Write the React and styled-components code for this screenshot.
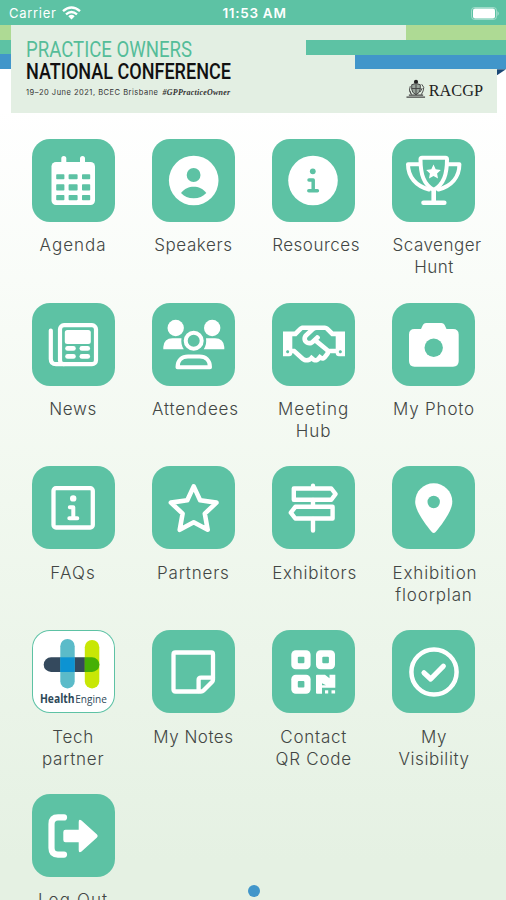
import React from 'react';
import styled, { createGlobalStyle } from 'styled-components';
import { FaRegHandshake } from 'react-icons/fa';

const color = {
  green: '#5dc2a4',
  lime: '#aeda94',
  blue: '#4196ca',
  navy: '#1c4a77',
  panel: '#e3efe3',
  text: '#424644',
};

const GlobalStyle = createGlobalStyle`
  * { box-sizing: border-box; }
  body { margin: 0; }
`;

const Screen = styled.div`
  width: 506px;
  height: 900px;
  overflow: hidden;
  position: relative;
  display: flex;
  flex-direction: column;
  background: linear-gradient(#ffffff 110px, #f1f8ef 500px, #e5f1e3 860px);
  font-family: Inter, 'Liberation Sans', sans-serif;
`;

const StatusBar = styled.div`
  flex: none;
  height: 25px;
  padding: 1px 6px 0 9px;
  display: grid;
  grid-template-columns: 1fr auto 1fr;
  align-items: center;
  background: ${color.green};
  color: #fff;
  font-size: 13px;
`;

const Carrier = styled.div`
  display: flex;
  align-items: center;
  gap: 5px;
  letter-spacing: 0.7px;
`;

const Clock = styled.div`
  font-size: 13.5px;
  font-weight: 600;
  letter-spacing: 0.7px;
`;

const Battery = styled.svg`
  justify-self: end;
`;

const Banner = styled.header`
  flex: none;
  position: relative;
  padding: 0 9px 0 11px;
  background: linear-gradient(
    ${color.lime} 15px,
    ${color.green} 15px 29.5px,
    ${color.blue} 29.5px 44px,
    #fff 44px
  ) left / 11px 100% no-repeat;
`;

const Panel = styled.div`
  height: 88px;
  padding: 13.5px 14px 0 15px;
  display: flex;
  justify-content: space-between;
  background: ${color.panel};
`;

const Title = styled.div`
  width: 240px;
  height: 22px;
  font-family: Roboto, sans-serif;
  font-size: 22px;
  font-weight: ${p => p.weight};
  line-height: 22px;
  white-space: nowrap;
  color: ${p => p.tint};
  transform: scaleX(${p => p.squeeze});
  transform-origin: left;
`;

const Details = styled.div`
  display: flex;
  gap: 4px;
  margin-top: 5.5px;
  font-size: 7.5px;
  line-height: 10px;
  letter-spacing: 0.5px;
  white-space: nowrap;
  color: #333;
`;

const HashTag = styled.span`
  font-family: 'Liberation Serif', serif;
  font-size: 8px;
  font-style: italic;
  font-weight: 700;
  letter-spacing: 0.25px;
`;

const Racgp = styled.div`
  align-self: flex-end;
  height: 34px;
  display: flex;
  gap: 3px;
  font-family: 'Liberation Serif', serif;
  font-size: 16.3px;
  line-height: 23px;
  color: #222;
`;

const Ribbons = styled.div`
  position: absolute;
  top: 0;
  right: 0;
  display: flex;
  flex-direction: column;
  align-items: flex-end;
`;

const Ribbon = styled.div`
  width: ${p => p.length}px;
  height: 14.75px;
  background: ${p => p.tint};
`;

const Fold = styled.div`
  width: 9px;
  height: 6px;
  background: ${color.navy};
  clip-path: polygon(0 0, 100% 0, 0 100%);
`;

const Grid = styled.main`
  display: grid;
  grid-template-columns: repeat(4, 83px);
  grid-auto-rows: 163.8px;
  column-gap: 37.3px;
  padding: 25.8px 0 0 31.6px;
`;

const Item = styled.div`
  display: flex;
  flex-direction: column;
`;

const Tile = styled.div`
  flex: none;
  width: 83px;
  height: 83px;
  border-radius: 18px;
  overflow: hidden;
  display: flex;
  align-items: center;
  justify-content: center;
  color: #fff;
  background: ${p => (p.plain ? '#fff' : color.green)};
  box-shadow: ${p => (p.plain ? `inset 0 0 0 1px ${color.green}` : 'none')};
`;

const Label = styled.div`
  margin-top: 12.4px;
  font-size: 17px;
  font-weight: 300;
  line-height: 22px;
  letter-spacing: ${p => p.tracking || 0.75}px;
  white-space: pre;
  color: ${color.text};
`;

const Line = styled.div`
  display: flex;
  justify-content: safe center;
`;

const Drawing = styled.svg`
  width: 83px;
  height: 83px;
`;

const Handshake = styled(FaRegHandshake)`
  width: 62px;
  height: 50px;
`;

const PageDot = styled.div`
  position: absolute;
  left: 247.5px;
  top: 884.5px;
  width: 12px;
  height: 12px;
  border-radius: 50%;
  background: ${color.blue};
`;

// all tile icons share the 83px tile as their canvas
const Icon = ({ children }) => (
  <Drawing viewBox="0 0 83 83" fill="#fff">{children}</Drawing>
);

const Strokes = ({ width = 4, children }) => (
  <g fill="none" stroke="#fff" strokeWidth={width} strokeLinecap="round" strokeLinejoin="round">
    {children}
  </g>
);

const Agenda = () => (
  <Icon>
    <rect x="19.5" y="23" width="43.5" height="43" rx="4.5" />
    <rect x="29.3" y="17" width="5" height="10" rx="2.5" />
    <rect x="48" y="17" width="5" height="10" rx="2.5" />
    <g fill={color.green}>
      {[[35.3, 5], [45.3, 6.3], [56, 5.3]].map(([y, h]) => (
        <React.Fragment key={y}>
          <rect x="24.2" y={y} width="8.2" height={h} rx="0.8" />
          <rect x="36.6" y={y} width="9" height={h} rx="0.8" />
          <rect x="50" y={y} width="8.2" height={h} rx="0.8" />
        </React.Fragment>
      ))}
    </g>
  </Icon>
);

const Speakers = () => (
  <Icon>
    <circle cx="41.7" cy="41.5" r="24.8" />
    <g fill={color.green}>
      <circle cx="41.6" cy="36" r="6.9" />
      <path d="M29 54C32.5 49.5 37 47.7 41.7 47.7S51 49.5 54.3 54C51 57.5 47 59.3 41.7 59.3S32 57.5 29 54Z" />
    </g>
  </Icon>
);

const Resources = () => (
  <Icon>
    <circle cx="41" cy="41.5" r="24.8" />
    <circle cx="40.8" cy="32.3" r="2.9" fill={color.green} />
    <path d="M37 41h4.2v10.7M36.8 51.7h8.6" fill="none" stroke={color.green} strokeWidth="3.5" strokeLinecap="round" strokeLinejoin="round" />
  </Icon>
);

const Trophy = () => (
  <Icon>
    <Strokes>
      <path d="M30 18.7H53.5Q55 18.7 55 20.2C55 35 52 45 41.7 51C31.5 45 28.5 35 28.5 20.2Q28.5 18.7 30 18.7Z" />
      <path d="M28 25.3H16C16 38 24 47 37 50.5M55.5 25.3H67.4C67.4 38 59.5 47 46.5 50.5" />
    </Strokes>
    <Strokes width={4.6}><path d="M41.7 51V63.7M31.5 63.7H52.3" /></Strokes>
    <path d="M41.5 25.5l2.2 4.7 5.1.7-3.7 3.6.9 5.1-4.5-2.5-4.5 2.5.9-5.1-3.7-3.6 5.1-.7z" />
  </Icon>
);

const News = () => (
  <Icon>
    <Strokes width={4.2}>
      <rect x="28" y="22.2" width="36" height="39" rx="4" />
      <path d="M18.8 27.5V56Q18.8 61.2 24 61.2H32" />
    </Strokes>
    <rect x="32.8" y="27" width="26" height="14" rx="2.5" />
    <rect x="33.2" y="43" width="10.6" height="4.8" rx="2.4" />
    <rect x="47.5" y="43" width="10.6" height="4.8" rx="2.4" />
    <rect x="33.2" y="51" width="10.6" height="4.8" rx="2.4" />
    <rect x="47.5" y="51" width="10.6" height="4.8" rx="2.4" />
  </Icon>
);

const Attendees = () => (
  <Icon>
    <circle cx="23.7" cy="25" r="8.2" />
    <circle cx="60.2" cy="25" r="8.2" />
    <path d="M11.3 46.2V44Q12 35.3 20.5 35.3H29.5Q28.5 41.5 31.8 46.2Z" />
    <path d="M72.3 46.2V44Q71.6 35.3 63 35.3H54Q55 41.5 51.7 46.2Z" />
    <Strokes>
      <circle cx="41.7" cy="37.7" r="8" />
      <path d="M25.5 64.2C25.5 57 30 53.5 36 53.5H47.5C53.5 53.5 58 57 58 64.2Z" />
    </Strokes>
  </Icon>
);

const Photo = () => (
  <Icon>
    <path d="M22.5 26H29L31 21.7Q32 20 34 20H49.5Q51.5 20 52.5 21.7L54.5 26H61Q66.7 26 66.7 31.5V58Q66.7 63.7 61 63.7H22.5Q17 63.7 17 58V31.5Q17 26 22.5 26Z" />
    <circle cx="41.7" cy="44.7" r="9.2" fill={color.green} />
  </Icon>
);

const Faqs = () => (
  <Icon>
    <Strokes width={4.3}><rect x="21.5" y="22.2" width="39.3" height="39.3" rx="2.5" /></Strokes>
    <circle cx="41.2" cy="32.4" r="3.2" />
    <Strokes width={4}><path d="M37.8 41.3H41.3V52.2M37.3 52.2H45.3" /></Strokes>
  </Icon>
);

const Star = () => (
  <Icon>
    <Strokes width={4.6}>
      <path d="M41.7 20.4L48.1 34.2L64.5 36.6L52.8 47.6L55.7 63.8L41.7 56.2L27.7 63.8L30.6 47.6L18.9 36.6L35.3 34.2Z" />
    </Strokes>
  </Icon>
);

const Signpost = () => (
  <Icon>
    <Strokes width={4.4}>
      <path d="M41 19.8V22M41 34V40.7M41 53V64.5" />
      <path d="M21.8 22.5H59.3L63.6 28L59.3 33.7H21.8Z" />
      <path d="M60.6 40.8H23.3L18.8 46.7L23.3 52.5H60.6Z" />
    </Strokes>
  </Icon>
);

const Pin = () => (
  <Icon>
    <path d="M41.7 17.3C52 17.3 60.3 25.5 60.3 35.8C60.3 45 49.5 59 43.6 66Q41.7 68 39.8 66C33.9 59 23.2 45 23.2 35.8C23.2 25.5 31.4 17.3 41.7 17.3Z" />
    <circle cx="41.7" cy="36" r="6.2" fill={color.green} />
  </Icon>
);

const HealthEngine = () => (
  <Icon>
    <rect x="11.7" y="27.3" width="55.5" height="14.7" rx="7.35" fill="#34495d" />
    <rect x="28.3" y="9" width="14.4" height="49.4" rx="7.2" fill="#5bbbc9" />
    <rect x="52.8" y="10" width="14.5" height="48.4" rx="7.25" fill="#c8e705" />
    <rect x="28.3" y="27.3" width="14.4" height="14.7" fill="#0d93d2" />
    <path d="M52.8 27.3H60A7.35 7.35 0 0 1 60 42H52.8Z" fill="#46b005" />
    <g fontSize="11.5" fill="#2d4858" fontFamily="'Open Sans', sans-serif">
      <text x="8" y="72.6" fontWeight="700" textLength="34.5" lengthAdjust="spacingAndGlyphs">Health</text>
      <text x="43.2" y="72.6" textLength="31.6" lengthAdjust="spacingAndGlyphs">Engine</text>
    </g>
  </Icon>
);

const Notes = () => (
  <Icon>
    <Strokes width={4.3}>
      <path d="M59.5 22.5H23.5Q21.5 22.5 21.5 24.5V59.5Q21.5 61.5 23.5 61.5H49Q50.5 61.5 51.5 60.5L60 52Q61 51 61 49.5V24.5Q61 22.5 59.5 22.5Z" />
      <path d="M61 47.6H49Q46.6 47.6 46.6 50V61" />
    </Strokes>
  </Icon>
);

const QrCode = () => (
  <Icon>
    <rect x="19.3" y="20.3" width="19.3" height="19" rx="4.5" />
    <rect x="44" y="20.3" width="19" height="19" rx="4.5" />
    <rect x="19.3" y="44.7" width="19.3" height="19" rx="4.5" />
    <g fill={color.green}>
      <rect x="25.8" y="26.7" width="6.6" height="6.6" rx="1" />
      <rect x="50.3" y="26.7" width="6.6" height="6.6" rx="1" />
      <rect x="25.8" y="51" width="6.6" height="6.6" rx="1" />
    </g>
    <path d="M44 45.5Q44 44.7 45 44.7H53L57.5 48.3V44.7H63.3V57.8H50V63.7H45Q44 63.7 44 62.7Z" />
    <path d="M50 53.2L54 55.2H50Z" fill={color.green} />
    <rect x="53" y="60.3" width="3.2" height="3.2" />
    <rect x="59.5" y="60.3" width="3.6" height="3.2" />
  </Icon>
);

const Visible = () => (
  <Icon>
    <Strokes width={4.5}><circle cx="42" cy="42" r="22.6" /></Strokes>
    <Strokes width={5.2}><path d="M32 42.8L38.7 49L51.3 36.2" /></Strokes>
  </Icon>
);

const LogOut = () => (
  <Icon>
    <Strokes width={6.2}><path d="M32 23.4H26Q19.5 23.4 19.5 30V54Q19.5 60.6 26 60.6H32" /></Strokes>
    <path d="M33.5 35.7H46.7V28Q46.7 24.5 49.5 26.5L65 40.5Q66.5 42 65 43.5L49.5 57.5Q46.7 59.5 46.7 56V48.3H33.5Q31.3 48.3 31.3 46V38Q31.3 35.7 33.5 35.7Z" />
  </Icon>
);

const items = [
  { label: 'Agenda', icon: <Agenda />, tracking: 1 },
  { label: 'Speakers', icon: <Speakers />, tracking: 0.6 },
  { label: 'Resources', icon: <Resources />, tracking: 0.5 },
  { label: 'Scavenger\nHunt', icon: <Trophy />, tracking: 0.5 },
  { label: 'News', icon: <News />, tracking: 0.6 },
  { label: 'Attendees', icon: <Attendees />, tracking: 0.85 },
  { label: 'Meeting\nHub', icon: <Handshake />, tracking: 1 },
  { label: 'My Photo', icon: <Photo />, tracking: 0.8 },
  { label: 'FAQs', icon: <Faqs />, tracking: 1.1 },
  { label: 'Partners', icon: <Star />, tracking: 0.8 },
  { label: 'Exhibitors', icon: <Signpost />, tracking: 0.75 },
  { label: 'Exhibition\nfloorplan', icon: <Pin />, tracking: 0.85 },
  { label: 'Tech\npartner', icon: <HealthEngine />, plain: true },
  { label: 'My Notes', icon: <Notes />, tracking: 0.5 },
  { label: 'Contact\nQR Code', icon: <QrCode /> },
  { label: 'My\nVisibility', icon: <Visible />, tracking: 0.6 },
  { label: 'Log Out', icon: <LogOut />, tracking: 1.1 },
];

const Wifi = () => (
  <svg width="19" height="14" viewBox="0 0 19 14" fill="none" stroke="#fff" strokeWidth="2.4">
    <path d="M1 5.2Q9.5-2.3 18 5.2M4 8.3Q9.5 3.6 15 8.3" />
    <path d="M6.3 10.2Q9.5 7.5 12.7 10.2L9.5 13.4Z" fill="#fff" stroke="none" />
  </svg>
);

const Crest = () => (
  <svg width="20" height="20" viewBox="0 0 21 20" fill="none" stroke="#444" strokeWidth="1">
    <circle cx="10.5" cy="2.6" r="2.2" fill="#222" stroke="none" />
    <path d="M6 5.5Q10.5 3 15 5.5V10Q15 14 10.5 16Q6 14 6 10Z" fill="#9aa59c" />
    <path d="M10.5 5V16M6 9.5H15M4.500 7Q2.5 11 5 15M16.5 5Q20 8 18 12L16 16M4 12L6 16M17 9L15 13" />
    <path d="M0.5 18.5H20M3 16.5H18" strokeWidth="1.4" />
  </svg>
);

class App extends React.Component {
  render() {
    return (
      <Screen>
        <GlobalStyle />
        <StatusBar>
          <Carrier>Carrier <Wifi /></Carrier>
          <Clock>11:53 AM</Clock>
          <Battery width="29" height="13" viewBox="0 0 29 13">
            <rect x="0.5" y="0.5" width="25" height="12" rx="3" fill="none" stroke="#fff" strokeOpacity="0.4" />
            <rect x="2" y="1.5" width="22" height="10" rx="2" fill="#fff" />
            <path d="M26.500 4Q29 6.500 26.500 9Z" fill="#fff" fillOpacity="0.5" />
          </Battery>
        </StatusBar>
        <Banner>
          <Panel>
            <div>
              <Title tint="#55bd99" weight={400} squeeze={0.845}>PRACTICE OWNERS</Title>
              <Title tint="#111" weight={500} squeeze={0.82}>NATIONAL CONFERENCE</Title>
              <Details>
                19–20 June 2021, BCEC Brisbane
                <HashTag>#GPPracticeOwner</HashTag>
              </Details>
            </div>
            <Racgp><Crest />RACGP</Racgp>
          </Panel>
          <Ribbons>
            <Ribbon length={100} tint={color.lime} />
            <Ribbon length={200} tint={color.green} />
            <Ribbon length={151} tint={color.blue} />
            <Fold />
          </Ribbons>
        </Banner>
        <Grid>
          {items.map(item => (
            <Item key={item.label}>
              <Tile plain={item.plain}>{item.icon}</Tile>
              <Label tracking={item.tracking}>
                {item.label.split('\n').map(line => <Line key={line}>{line}</Line>)}
              </Label>
            </Item>
          ))}
        </Grid>
        <PageDot />
      </Screen>
    );
  }
}

export default App;
